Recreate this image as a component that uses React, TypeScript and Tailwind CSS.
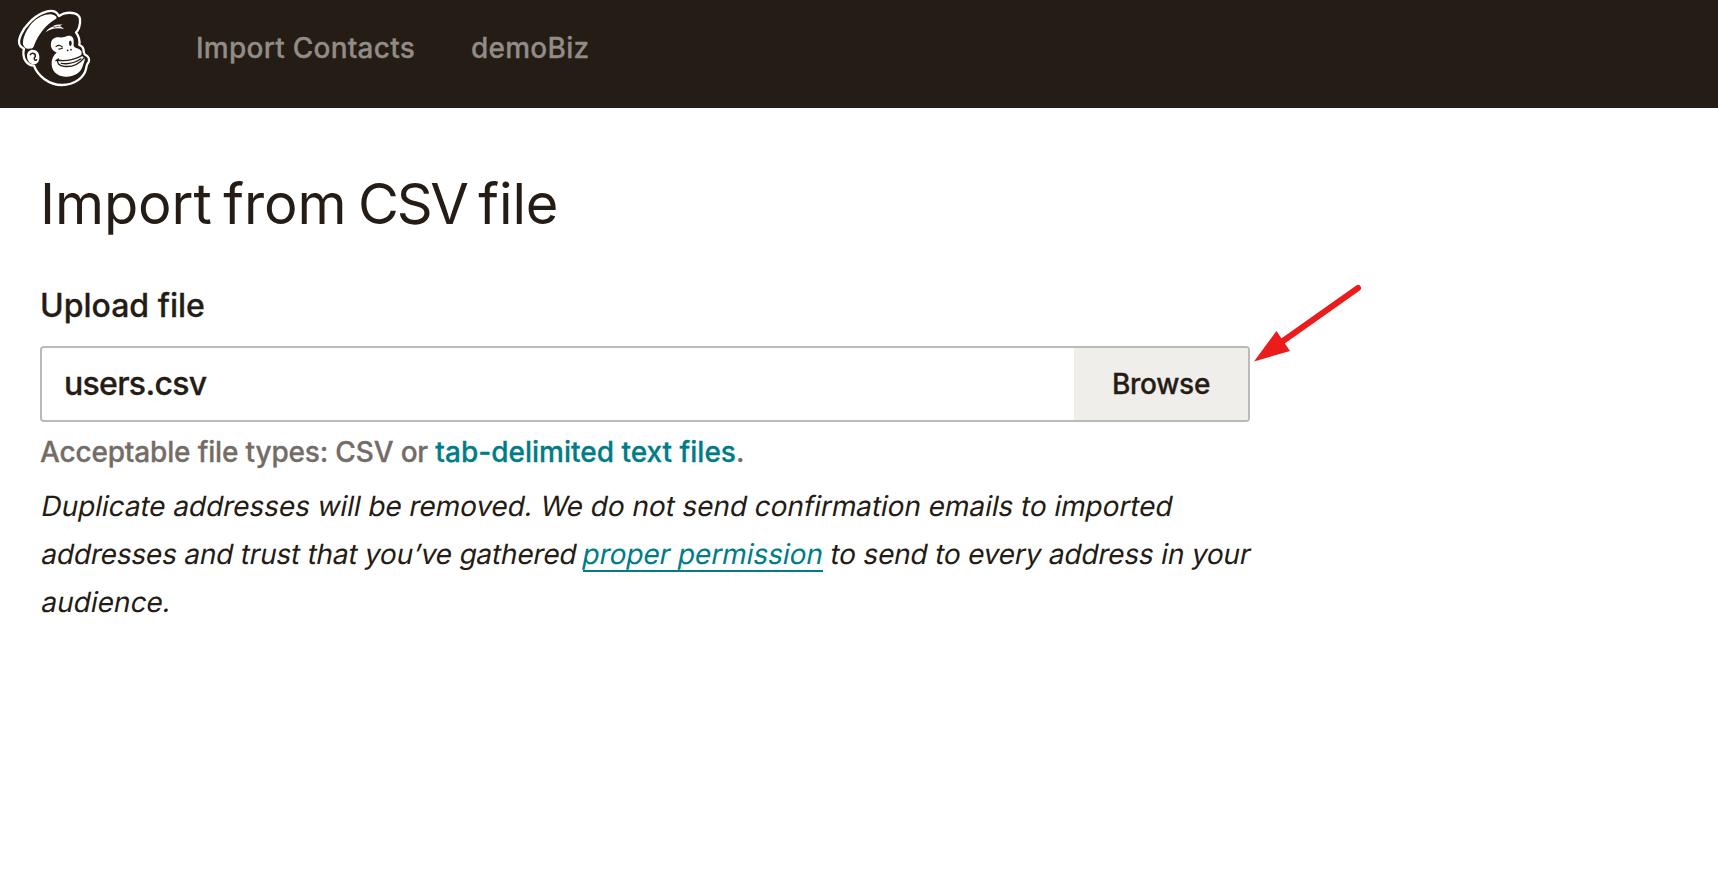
function Logo() {
  return (
    <svg viewBox="0 0 330 330" className="h-[110px] w-[110px] shrink-0" fill="none" strokeLinecap="round" strokeLinejoin="round">
      <path d="M163 34C145 28 110 43 88 68C66 90 54 118 58 132C60 141 68 142 72 147C69 155 69 172 77 183C84 193 95 197 102 197C112 226 146 255 186 255C224 255 252 232 258 207C260 199 259 194 266 186C269 178 265 169 257 165C252 163 251 160 251 154C251 145 246 138 238 135C240 122 236 108 228 97C235 92 242 75 240 57C237 41 215 34 191 41C186 43 181 46 177 48C174 41 170 37 163 34Z" stroke="#fff" strokeWidth="7" />
      <path d="M158 44C167 46 174 52 167 57C140 72 113 104 101 140C98 146 93 145 87 146C82 147 76 147 72 139C63 127 74 96 94 71C114 49 143 40 158 44Z" fill="#fff" />
      <path d="M98 149C112 149 119 161 118 174C117 187 110 193 101 193C89 192 81 181 81 167C81 156 88 149 98 149Z" fill="#fff" />
      <path d="M91 164C96 157 107 160 106 169C105 173 101 173 103 178C104 182 108 181 110 179" stroke="#241c15" strokeWidth="4.5" />
      <path d="M137 97C144 86 154 80 165 79L160 77C168 74 178 73 188 74C183 75 180 77 178 79C183 80 188 83 192 87C177 82 152 84 137 97Z" fill="#fff" />
      <path d="M162 83C168 80 173 79 177 79" stroke="#241c15" strokeWidth="2" />
      <path d="M153 130C154 117 165 110 178 112C188 114 194 110 202 108C214 105 221 112 221 123C222 134 218 139 227 143C239 147 246 151 245 161C244 168 250 171 254 175C256 182 250 190 248 199C242 220 220 231 196 230C169 230 154 210 155 190C155 174 163 163 170 158C158 152 151 144 153 130Z" fill="#fff" />
      <path d="M172 180C192 184 218 180 240 170C245 168 248 165 248 160M173 180C171 190 177 197 192 199C216 202 238 191 251 175M184 190C202 193 225 188 242 177M168 182L175 177" stroke="#241c15" strokeWidth="4.2" />
      <path d="M168 140C175 134 182 136 187 141M176 147C180 148 183 147 187 145" stroke="#241c15" strokeWidth="3.2" />
      <ellipse cx="211" cy="130" rx="4" ry="8.5" fill="#241c15" />
      <circle cx="203" cy="151" r="2.6" fill="#241c15" />
      <circle cx="213" cy="149" r="2.6" fill="#241c15" />
    </svg>
  );
}

export default function App() {
  return (
    <div className="h-[882px] w-full overflow-hidden bg-white font-['Inter',sans-serif] text-[#241c15]">
      <header className="flex h-[108px] items-start bg-[#241c15] text-[28px] font-medium leading-[97px] tracking-[0.24px] text-[#918c86] [-webkit-text-stroke:0.3px]">
        <Logo />
        <nav className="ml-[86px] flex gap-[56px]">
          <span>Import Contacts</span>
          <span>demoBiz</span>
        </nav>
      </header>
      <main className="w-[1250px] pl-10 pt-[60px]">
        <h1 className="text-[56px] leading-[73px] tracking-[-0.1px] [word-spacing:-4px]">
          Import from <span className="tracking-[-2.3px]">CSV</span> file
        </h1>
        <label className="mt-[45px] block text-[32px] font-medium leading-[40px] [-webkit-text-stroke:0.3px]">Upload file</label>
        <div className="mt-[20px] flex h-[76px] overflow-hidden rounded-[4px] border-2 border-[#bdbab6]">
          <div className="flex-1 pl-[22px] text-[32px] font-medium leading-[72px] tracking-[-0.7px] [-webkit-text-stroke:0.3px]">users.csv</div>
          <button className="w-[174px] bg-[#efeeea] text-center text-[28px] font-medium leading-[72px] tracking-[-0.3px] [-webkit-text-stroke:0.3px]">Browse</button>
        </div>
        <p className="mt-[8px] whitespace-nowrap text-[28px] font-medium leading-[44px] text-[#736c67] [-webkit-text-stroke:0.3px]">
          <span className="tracking-[-0.17px]">Acceptable file types: CSV or </span>
          <a className="text-[#007c89]">tab-delimited text files</a>.
        </p>
        <p className="mt-[8px] whitespace-nowrap pl-[2px] text-[28px] leading-[48px]">
          <span className="block -skew-x-[11deg] tracking-[-0.07px]">Duplicate addresses will be removed. We do not send confirmation emails to imported</span>
          <span className="block">
            <span className="inline-block -skew-x-[11deg] tracking-[-0.21px]">addresses and trust that you’ve gathered</span>
            <span className="ml-[6px] mr-[8px] inline-block h-[35px] border-b-2 border-[#007c89] leading-[34px] text-[#007c89]">
              <span className="inline-block -skew-x-[11deg] tracking-[-0.06px]">proper permission</span>
            </span>
            <span className="inline-block -skew-x-[11deg] tracking-[-0.19px]">to send to every address in your</span>
          </span>
          <span className="block -skew-x-[11deg]">audience.</span>
        </p>
      </main>
      <svg className="absolute left-[1250px] top-[280px] h-[90px] w-[120px]" viewBox="1250 280 120 90">
        <path d="M1283 341L1358 288" stroke="#ec1c1c" strokeWidth="6" strokeLinecap="round" />
        <path d="M1254 361.5L1276.5 331L1290 351Z" fill="#ec1c1c" />
      </svg>
    </div>
  );
}
